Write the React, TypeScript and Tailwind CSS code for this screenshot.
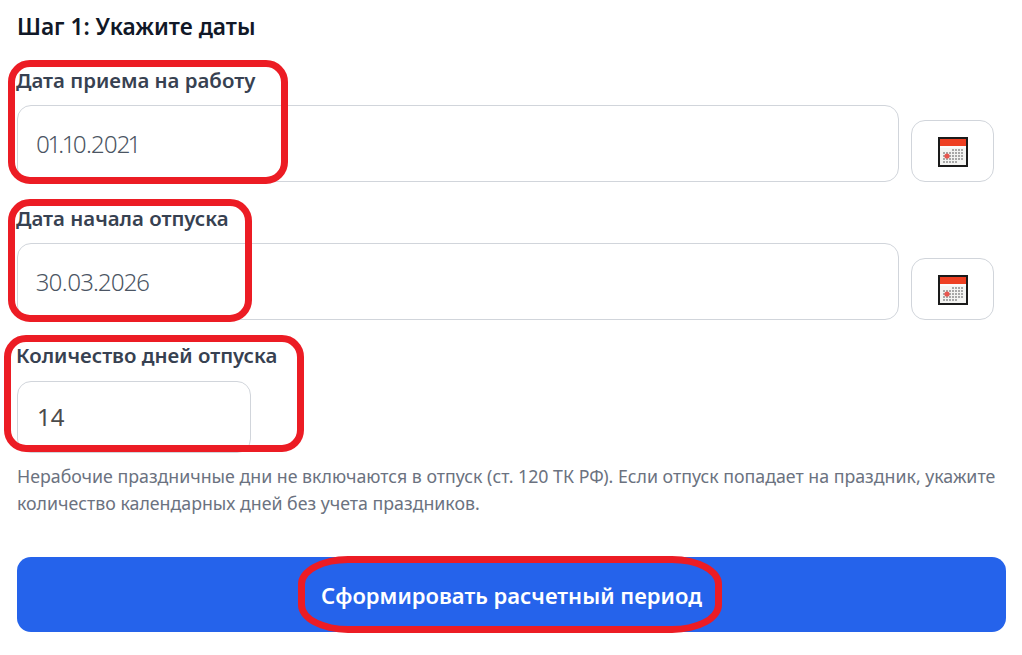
import React from "react";

function CalendarIcon() {
  return (
    <svg width="30" height="30" viewBox="0 0 30 30" aria-hidden="true" className="mt-[2px]">
      <rect x="0" y="0" width="30" height="30" fill="#1a1a1a" />
      <rect x="2" y="2" width="26" height="26" fill="#f4f4f2" />
      <rect x="2" y="2" width="26" height="7" fill="#ee3f22" />
      <rect x="2" y="9" width="26" height="2" fill="#fbfbfb" />
      {[12, 15, 18, 21, 24].map((y, r) =>
        [5, 8, 11, 14, 17, 20, 23].map((x, c) =>
          (r === 0 && c < 3) || (r === 4 && c > 4) ? null : (
            <rect key={`${r}-${c}`} x={x} y={y} width="2" height="2" fill="#a8a8a8" />
          )
        )
      )}
      <circle cx="9" cy="19" r="2.6" fill="#e8564f" />
    </svg>
  );
}

function DateField({ label, value, box }: { label: string; value: string; box: string }) {
  return (
    <div className="relative flex flex-col">
      <label className="-ml-px text-[20.4px] leading-[24px] font-semibold text-[#374151]">{label}</label>
      <div className="mt-[13px] flex items-end gap-3">
        <input
          readOnly
          value={value}
          className="h-[77px] w-[882px] rounded-[14px] border border-[#d1d5db] bg-white pl-[18px] text-[24px] font-light tracking-[-0.6px] proportional-nums text-[#4b5563] outline-none"
        />
        <button className="flex h-[62px] w-[83px] items-center justify-center rounded-[14px] border border-[#d1d5db] bg-white">
          <CalendarIcon />
        </button>
      </div>
      <div className={box} />
    </div>
  );
}

export default function App() {
  return (
    <div
      className="relative h-[655px] w-[1022px] overflow-hidden bg-white pl-[17px]"
      style={{ fontFamily: '"Noto Sans", "Open Sans", sans-serif' }}
    >
      <h2 className="pt-[13px] text-[22.7px] leading-[28px] font-semibold text-[#111827]">Шаг 1: Укажите даты</h2>

      <div className="mt-[27px] flex flex-col gap-[24px]">
        <DateField
          label="Дата приема на работу"
          value="01.10.2021"
          box="pointer-events-none absolute -left-[9px] -top-[8px] h-[124px] w-[280px] rounded-[22px] border-[7px] border-[#ec1c24]"
        />
        <DateField
          label="Дата начала отпуска"
          value="30.03.2026"
          box="pointer-events-none absolute -left-[9px] -top-[7px] h-[123px] w-[244px] rounded-[22px] border-[7px] border-[#ec1c24]"
        />
      </div>

      <div className="relative mt-[23px] flex flex-col">
        <label className="-ml-px text-[20.4px] leading-[24px] font-semibold text-[#374151]">Количество дней отпуска</label>
        <input
          readOnly
          value="14"
          className="mt-[14px] h-[72px] w-[234px] rounded-[14px] border border-[#d1d5db] bg-white pb-[2px] pl-[19px] text-[24px] text-[#4b4b4b] outline-none"
        />
        <div className="pointer-events-none absolute -left-[13px] -top-[8px] h-[117px] w-[300px] rounded-[22px] border-[7px] border-[#ec1c24]" />
      </div>

      <p className="mt-[10px] w-[989px] text-[17.75px] leading-[27px] text-[#6b7280]">
        Нерабочие праздничные дни не включаются в отпуск (ст. 120 ТК РФ). Если отпуск попадает на праздник, укажите
        количество календарных дней без учета праздников.
      </p>

      <div className="relative mt-[40px] w-[989px]">
        <button className="flex h-[75px] w-full items-center justify-center rounded-[14px] bg-[#2563eb] pt-[1px] text-[22px] font-semibold text-white">
          Сформировать расчетный период
        </button>
        <div className="pointer-events-none absolute left-[281px] -top-[1px] h-[77px] w-[424px] rounded-[50px/28px] border-[7px] border-[#ec1c24]" />
      </div>
    </div>
  );
}
